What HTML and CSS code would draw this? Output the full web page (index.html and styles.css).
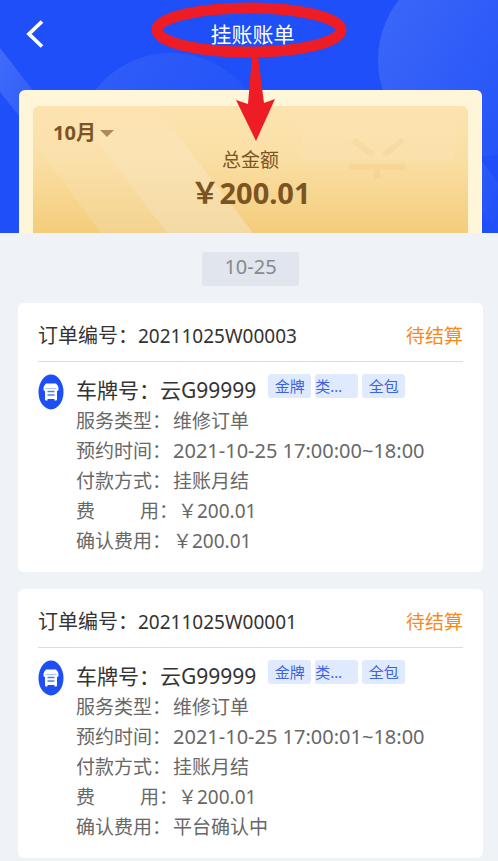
FILE: index.html
```html
<!DOCTYPE html>
<html lang="zh-CN">
<head>
<meta charset="utf-8">
<meta name="viewport" content="width=device-width, initial-scale=1">
<title>挂账账单</title>
<link rel="stylesheet" href="styles.css">
</head>
<body>
<svg class="defs" aria-hidden="true">
  <symbol id="shop" viewBox="0 0 26 36">
    <ellipse cx="13" cy="18" rx="12.5" ry="17.5" fill="#1e4ff5"/>
    <path d="M8 9.500H18Q20.500 12 20.500 14V15.500Q20.500 17 19 17V25.500Q19 26.500 18 26.500H16.500V25H9.500V26.500H8Q7 26.500 7 25.500V17Q5.500 17 5.500 15.500V14Q5.500 12 8 9.500Z" fill="#fff"/>
    <path d="M9.500 17.500H16.500M9.500 21H16.500" stroke="#4a7cf2" stroke-width="1.500"/>
    <path d="M7.500 14.500H18.500" stroke="#a9c4fb" stroke-width="1"/>
  </symbol>
</svg>

<header class="hero">
  <svg class="hero-art" viewBox="0 0 498 233" preserveAspectRatio="none" aria-hidden="true">
    <defs>
      <linearGradient id="orb" x1="0" y1="0.300" x2="1" y2="0.900">
        <stop offset="0" stop-color="#fff" stop-opacity=".13"/>
        <stop offset="1" stop-color="#fff" stop-opacity="0"/>
      </linearGradient>
      <linearGradient id="beam" x1="0" y1="0" x2="1" y2="1">
        <stop offset="0" stop-color="#fff" stop-opacity=".16"/>
        <stop offset="1" stop-color="#fff" stop-opacity="0"/>
      </linearGradient>
    </defs>
    <circle cx="475" cy="60" r="97" fill="url(#orb)"/>
    <circle cx="171" cy="149" r="96" fill="url(#orb)" opacity=".6"/>
    <path d="M0 48L70 138V180L0 92Z" fill="url(#beam)"/>
    <path d="M440 110L498 182V233L440 160Z" fill="url(#beam)"/>
  </svg>
  <div class="titlebar">
    <button class="back" type="button" aria-label="返回">
      <svg viewBox="0 0 18 28" aria-hidden="true"><path d="M16 1.500L3 14L16 26.500" fill="none" stroke="#fff" stroke-width="3.800"/></svg>
    </button>
    <h1>挂账账单</h1>
    <svg class="callout" viewBox="0 0 196 142" aria-hidden="true">
      <ellipse cx="98" cy="30" rx="92" ry="22" fill="none" stroke="#ee1c25" stroke-width="11"/>
      <path d="M101 56H107L113 103L124 99L105 141L85 100L97 104Z" fill="#ee1c25"/>
    </svg>
  </div>
  <section class="wallet">
    <div class="gold">
      <svg class="gold-art" viewBox="0 0 435 127" preserveAspectRatio="none" aria-hidden="true">
        <defs>
          <linearGradient id="sheen" x1="0" y1="0" x2="0" y2="1">
            <stop offset="0" stop-color="#fff" stop-opacity="0"/>
            <stop offset="1" stop-color="#f2e6cf" stop-opacity=".4"/>
          </linearGradient>
        </defs>
        <path d="M0 0V36L68 127H220L122 0Z" fill="url(#sheen)" opacity=".6"/>
        <path d="M38 0L134 127H220L122 0Z" fill="url(#sheen)" opacity=".8"/>
        <path d="M269 8H422V48Q422 55 415 55H276Q269 55 269 48Z" fill="#fff" fill-opacity=".06"/>
        <path d="M320 34L340 49M370 34L351 49M316 61H372M344 61V72" fill="none" stroke="#dba850" stroke-opacity=".1" stroke-width="6"/>
      </svg>
      <label class="month">
        <select aria-label="月份"><option>10月</option></select>
      </label>
      <p class="caption">总金额</p>
      <p class="total">￥200.01</p>
    </div>
  </section>
</header>

<main>
  <time class="day" datetime="2021-10-25">10-25</time>

  <article class="order">
    <div class="order-head">
      <h2>订单编号：<span class="serial">20211025W00003</span></h2>
      <span class="status">待结算</span>
    </div>
    <div class="order-body">
      <svg class="shop" aria-hidden="true"><use href="#shop"/></svg>
      <div class="info">
        <div class="plate">
          <h3>车牌号：云G99999</h3>
          <div class="tags"><span class="tag">金牌</span><span class="tag clipped">类…</span><span class="tag">全包</span></div>
        </div>
        <dl>
          <div><dt>服务类型：</dt><dd>维修订单</dd></div>
          <div><dt>预约时间：</dt><dd class="num">2021-10-25 17:00:00~18:00</dd></div>
          <div><dt>付款方式：</dt><dd>挂账月结</dd></div>
          <div><dt class="spread"><span>费</span><span>用：</span></dt><dd>￥200.01</dd></div>
          <div><dt>确认费用：</dt><dd>￥200.01</dd></div>
        </dl>
      </div>
    </div>
  </article>

  <article class="order">
    <div class="order-head">
      <h2>订单编号：<span class="serial">20211025W00001</span></h2>
      <span class="status">待结算</span>
    </div>
    <div class="order-body">
      <svg class="shop" aria-hidden="true"><use href="#shop"/></svg>
      <div class="info">
        <div class="plate">
          <h3>车牌号：云G99999</h3>
          <div class="tags"><span class="tag">金牌</span><span class="tag clipped">类…</span><span class="tag">全包</span></div>
        </div>
        <dl>
          <div><dt>服务类型：</dt><dd>维修订单</dd></div>
          <div><dt>预约时间：</dt><dd class="num">2021-10-25 17:00:01~18:00</dd></div>
          <div><dt>付款方式：</dt><dd>挂账月结</dd></div>
          <div><dt class="spread"><span>费</span><span>用：</span></dt><dd>￥200.01</dd></div>
          <div><dt>确认费用：</dt><dd>平台确认中</dd></div>
        </dl>
      </div>
    </div>
  </article>
</main>
</body>
</html>
```
FILE: styles.css
```css
* { box-sizing: border-box; }

body, h1, h2, h3, p, dl, dd { margin: 0; font-weight: 400; }

body {
  background: #eff3f8;
  color: #333;
  font-family: "Noto Sans", "Noto Sans CJK SC", sans-serif;
  font-size: 19px;
}

.defs { display: block; width: 0; height: 0; }

/* Header */
.hero {
  position: relative;
  padding: 0 16px 0 19px;
  background: #1e4ff8;
}

.hero-art, .gold-art {
  position: absolute;
  inset: 0;
  width: 100%;
  height: 100%;
}

.titlebar {
  position: relative;
  z-index: 1;
  display: grid;
  grid-template-columns: 32px 1fr 28px;
  align-items: center;
  height: 68px;
  margin-bottom: 22px;
}

.back {
  display: flex;
  justify-content: center;
  padding: 0;
  border: 0;
  background: none;
}

.back svg { width: 18px; height: 28px; }

h1 {
  color: #fff;
  font-size: 21px;
  line-height: 28px;
  text-align: center;
}

.callout {
  position: absolute;
  top: 0;
  left: 50%;
  width: 196px;
  height: 142px;
  margin-left: -100px;
}

.wallet {
  position: relative;
  padding: 16px 14px 0;
  border-radius: 6px 6px 0 0;
  background: #fff6d9;
}

.gold {
  position: relative;
  padding: 12px 20px 20px;
  border-radius: 6px 6px 0 0;
  background: linear-gradient(#fce3af, #fadfa5 40%, #f4cd7b);
  color: #7c5424;
  text-align: center;
}

.month {
  position: relative;
  display: flex;
  align-items: center;
  gap: 4px;
}

.month::after {
  content: "";
  border: 7px solid transparent;
  border-top-color: #ad8a57;
  border-bottom: 0;
}

.month select {
  appearance: none;
  padding: 0;
  border: 0;
  background: none;
  color: inherit;
  font: 700 20px/30px "Noto Sans", "Noto Sans CJK SC", sans-serif;
}

.caption { position: relative; line-height: 24px; }

.total {
  position: relative;
  font-size: 29px;
  font-weight: 700;
  line-height: 41px;
}

/* Bills */
main {
  display: flex;
  flex-direction: column;
  gap: 17px;
  padding: 19px 15px 3px 18px;
}

.day {
  align-self: center;
  padding: 0 22px 4px;
  border-radius: 3px;
  background: #e1e5ed;
  color: #858990;
  font-size: 20px;
  line-height: 30px;
}

.order {
  padding: 0 20px 16px;
  border-radius: 6px;
  background: #fff;
}

.order-head {
  display: flex;
  justify-content: space-between;
  align-items: center;
  padding-top: 8px;
  border-bottom: 1px solid #ddd;
  line-height: 50px;
}

h2 { font-size: 20px; }

.serial, .status { font-size: 19px; }

.status { color: #fa8a16; }

.order-body {
  display: flex;
  gap: 12px;
  padding-top: 12px;
}

.shop { flex: none; width: 26px; height: 36px; }

.info { flex: 1; }

.plate { display: flex; gap: 12px; }

h3 { font-size: 21px; line-height: 32px; }

.tags { display: flex; align-items: flex-start; gap: 4px; }

.tag {
  width: 43px;
  border-radius: 3px;
  background: #e0eafe;
  color: #3c62e0;
  font-size: 15px;
  line-height: 24px;
  text-align: center;
}

.clipped { text-align: left; }

dl { color: #686868; line-height: 30px; }

dl > div { display: flex; }

dt { width: 97px; }

.spread {
  display: flex;
  justify-content: space-between;
  width: 102px;
}

.num { font-size: 20px; }
```
